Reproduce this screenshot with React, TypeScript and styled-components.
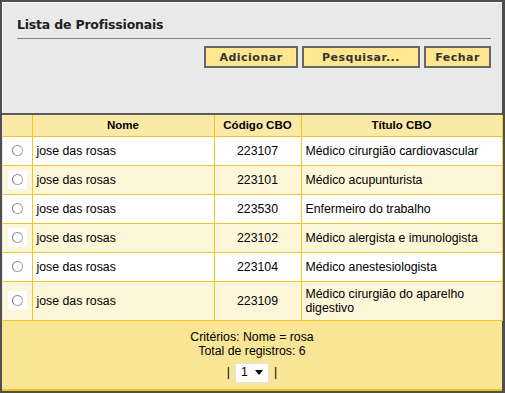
import { createGlobalStyle } from 'styled-components';
import styled from 'styled-components';

const GlobalStyle = createGlobalStyle`
  html, body {
    margin: 0;
    padding: 0;
    background: #ffffff;
  }
`;

const Window = styled.div`
  width: 505px;
  height: 393px;
  box-sizing: border-box;
  border: 2px solid #4f4f4f;
  border-right-width: 3px;
  background: #e9e9e9;
  display: flex;
  flex-direction: column;
  font-family: 'Liberation Sans', Arial, sans-serif;
`;

const Panel = styled.div`
  height: 113px;
  flex-shrink: 0;
  box-sizing: border-box;
  padding: 15px 11px 0 15px;
  box-shadow: inset 1px 1px 0 #ffffff;
  border-bottom: 2px solid #5c5c5c;
`;

const Title = styled.h1`
  margin: 0;
  font-family: 'DejaVu Sans', Verdana, sans-serif;
  font-weight: bold;
  font-size: 12.5px;
  letter-spacing: -0.2px;
  line-height: 16px;
  color: #1e1e1e;
  padding-bottom: 5px;
  border-bottom: 1px solid #808080;
`;

const Toolbar = styled.div`
  display: flex;
  justify-content: flex-end;
  gap: 4px;
  margin-top: 7px;
`;

const Button = styled.button<{ $w: number }>`
  width: ${(p) => p.$w}px;
  height: 22px;
  box-sizing: border-box;
  padding: 0;
  background: #ffe68f;
  border: 2px solid #666666;
  font-family: 'DejaVu Sans', Verdana, sans-serif;
  font-weight: bold;
  font-size: 11px;
  letter-spacing: 0.5px;
  color: #333333;
  cursor: pointer;
`;

const TableWrap = styled.div`
  flex-shrink: 0;
  padding: 0 0 0 1px;
`;

const Grid = styled.table`
  width: 499px;
  border-collapse: collapse;
  table-layout: fixed;
  font-size: 12.3px;
  color: #000;
`;

const HeadCell = styled.th`
  height: 21px;
  box-sizing: border-box;
  padding: 0 4px;
  background: #fbe9a8;
  border: 1px solid #f3c622;
  border-top: none;
  font-size: 11.5px;
  font-weight: bold;
  text-align: center;
  &:first-child {
    border-left: none;
  }
`;

const Row = styled.tr<{ $alt: boolean }>`
  background: ${(p) => (p.$alt ? '#fdf6d9' : '#ffffff')};
`;

const Cell = styled.td<{ $align?: string }>`
  height: 29px;
  box-sizing: border-box;
  padding: 5px 4px;
  line-height: 14px;
  border: 1px solid #f3c622;
  text-align: ${(p) => p.$align || 'left'};
  vertical-align: middle;
  &:first-child {
    border-left: none;
  }
`;

const RadioCell = styled(Cell)`
  padding: 0;
  text-align: center;
`;

const RadioBox = styled.span`
  display: inline-flex;
  align-items: center;
  justify-content: center;
  width: 19px;
  height: 19px;
  background: #ffffff;
  vertical-align: middle;
`;

const Radio = styled.span`
  width: 9px;
  height: 9px;
  border-radius: 50%;
  border: 1px solid #a8a8a8;
  border-left-color: #7a7a7a;
  border-top-color: #8a8a8a;
  background: #ffffff;
`;

const Footer = styled.div`
  flex: 1;
  background: #f9e596;
  border-bottom: 2px solid #f0c21a;
  text-align: center;
  font-size: 12.3px;
  line-height: 14.5px;
  color: #000;
  padding-top: 9px;
`;

const Pager = styled.div`
  display: flex;
  justify-content: center;
  align-items: center;
  gap: 5px;
  margin-top: 4px;
`;

const Select = styled.span`
  display: inline-flex;
  align-items: center;
  justify-content: space-between;
  width: 34px;
  height: 20px;
  box-sizing: border-box;
  padding: 0 5px 0 5px;
  background: #ffffff;
  border: 1px solid #e2e2e2;
  border-radius: 2px;
`;

const rows = [
  { name: 'jose das rosas', code: '223107', title: 'Médico cirurgião cardiovascular' },
  { name: 'jose das rosas', code: '223101', title: 'Médico acupunturista' },
  { name: 'jose das rosas', code: '223530', title: 'Enfermeiro do trabalho' },
  { name: 'jose das rosas', code: '223102', title: 'Médico alergista e imunologista' },
  { name: 'jose das rosas', code: '223104', title: 'Médico anestesiologista' },
  { name: 'jose das rosas', code: '223109', title: 'Médico cirurgião do aparelho digestivo' },
];

export default function App() {
  return (
    <>
      <GlobalStyle />
      <Window>
        <Panel>
          <Title>Lista de Profissionais</Title>
          <Toolbar>
            <Button $w={94}>Adicionar</Button>
            <Button $w={118}>Pesquisar...</Button>
            <Button $w={67}>Fechar</Button>
          </Toolbar>
        </Panel>

        <TableWrap>
          <Grid>
            <colgroup>
              <col style={{ width: 29 }} />
              <col style={{ width: 182 }} />
              <col style={{ width: 87 }} />
              <col style={{ width: 201 }} />
            </colgroup>
            <thead>
              <tr>
                <HeadCell />
                <HeadCell>Nome</HeadCell>
                <HeadCell>Código CBO</HeadCell>
                <HeadCell>Título CBO</HeadCell>
              </tr>
            </thead>
            <tbody>
              {rows.map((r, i) => (
                <Row key={r.code} $alt={i % 2 === 1}>
                  <RadioCell>
                    <RadioBox>
                      <Radio />
                    </RadioBox>
                  </RadioCell>
                  <Cell>{r.name}</Cell>
                  <Cell $align="center">{r.code}</Cell>
                  <Cell>{r.title}</Cell>
                </Row>
              ))}
            </tbody>
          </Grid>
        </TableWrap>

        <Footer>
          <div>Critérios: Nome = rosa</div>
          <div>Total de registros: 6</div>
          <Pager>
            <span>|</span>
            <Select>
              1
              <svg width="8" height="5" viewBox="0 0 8 5">
                <path d="M0 0 H8 L4 5 Z" fill="#000" />
              </svg>
            </Select>
            <span>|</span>
          </Pager>
        </Footer>
      </Window>
    </>
  );
}
